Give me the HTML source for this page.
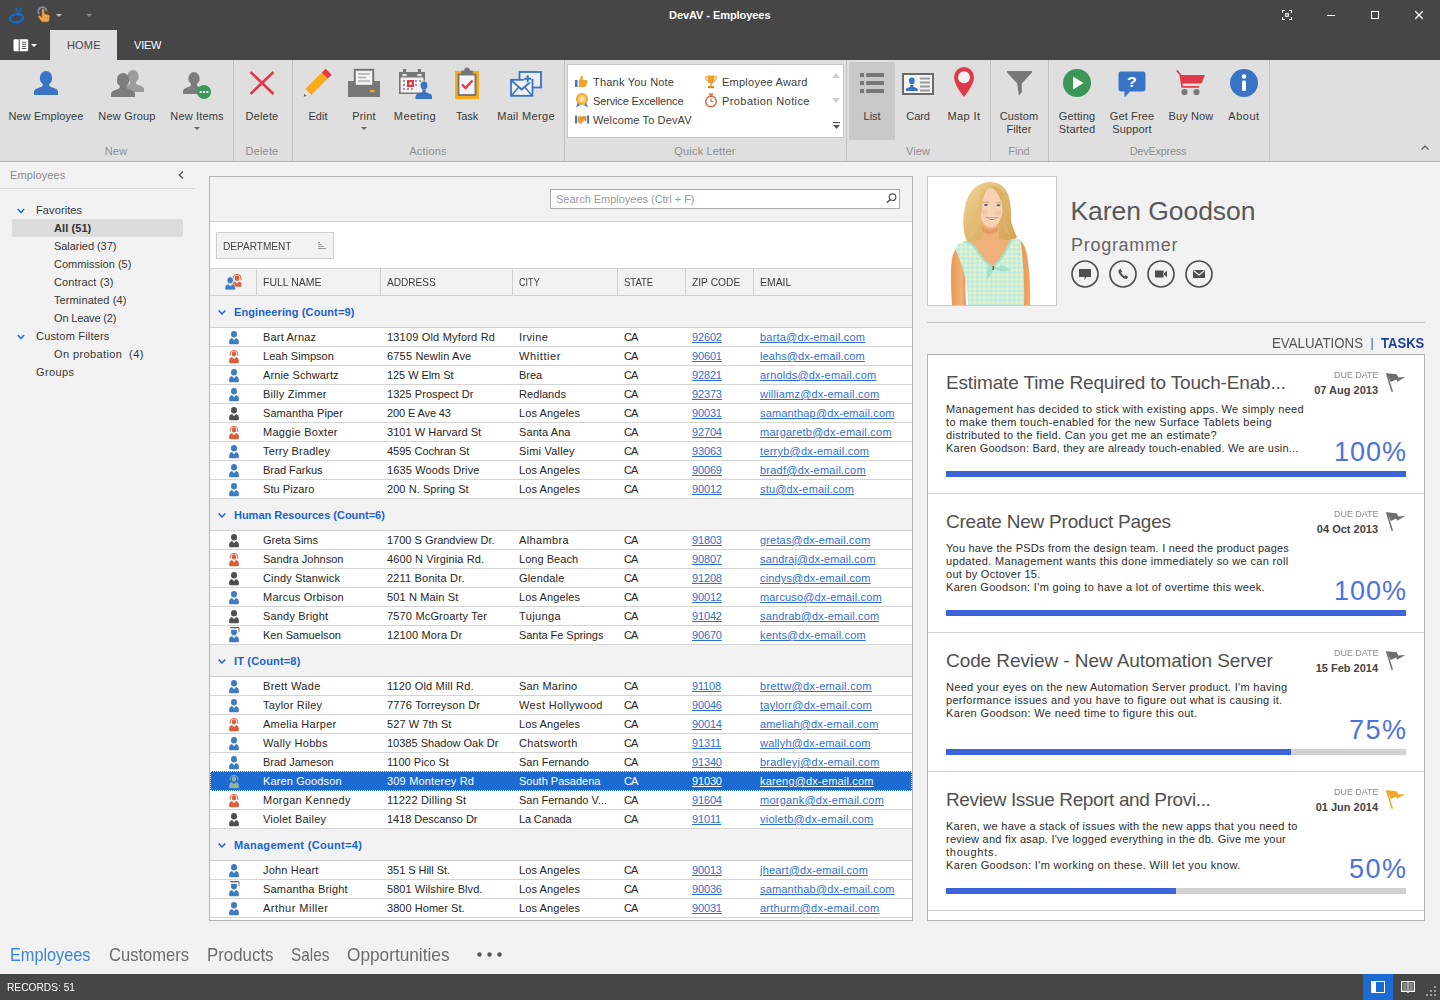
<!DOCTYPE html>
<html lang="en">
<head>
<meta charset="utf-8">
<title>DevAV - Employees</title>
<style>
*{box-sizing:border-box;margin:0;padding:0}
html,body{width:1440px;height:1000px;overflow:hidden}
body{position:relative;background:#f2f2f2;font-family:"Liberation Sans",sans-serif;font-size:11.5px;color:#3a3a3a}
.abs{position:absolute}
.t{position:absolute;white-space:nowrap;line-height:1;transform-origin:0 50%}
svg{position:absolute;overflow:visible}
#titlebar{position:absolute;left:0;top:0;width:1440px;height:60px;background:#464646}
#ribbon{position:absolute;left:0;top:60px;width:1440px;height:102px;background:#dfdfdf;border-bottom:1px solid #b4b4b4}
.rsep{position:absolute;top:60px;width:1px;height:101px;background:#c0c0c0}
.rl{position:absolute;white-space:nowrap;line-height:13px;text-align:center;transform:translateX(-50%);font-size:11px;color:#3a3a3a;letter-spacing:0.12px}
.rg{position:absolute;top:145px;white-space:nowrap;line-height:13px;transform:translateX(-50%);font-size:11px;color:#8f8f8f;letter-spacing:0.15px}
.dd{position:absolute;width:0;height:0;border-left:3px solid transparent;border-right:3px solid transparent;border-top:3px solid #666}
.tree{position:absolute;white-space:nowrap;line-height:15px;font-size:11px;color:#363636;letter-spacing:-0.1px}
.hd{font-size:11px;color:#3c3c3c}
.gr{font-size:11px;font-weight:bold;color:#1a63d1;letter-spacing:0.05px}
.c{font-size:11px;color:#262626}
.c1{letter-spacing:0.1px}.c2{letter-spacing:0.05px}.c3{letter-spacing:0.2px}.c4{letter-spacing:-0.9px}.c5{letter-spacing:-0.15px}.c6{letter-spacing:0.15px}
.w{color:#fff}
.l{color:#2f6fcf;text-decoration:underline}
.u{text-decoration:underline}
.tt{font-size:19px;color:#505050}
.ds{font-size:11px;color:#2c2c2c}
.pc{font-size:27px;color:#4d72e0}
.nv{font-size:19px;color:#6c6c6c}
</style>
</head>
<body>
<div id="titlebar"></div>
<!-- app logo -->
<svg style="left:8px;top:6px" width="18" height="18" viewBox="0 0 18 18"><ellipse cx="8.600" cy="12.200" rx="6.600" ry="4" fill="none" stroke="#0a6fd6" stroke-width="2" transform="rotate(-8 8.600 12.200)"/><path d="M10.500 8L8 2M10.300 8.500L13.700 1.500" stroke="#0a6fd6" stroke-width="1.200" fill="none"/></svg>
<!-- touch icon -->
<svg style="left:36px;top:6px" width="16" height="18" viewBox="0 0 16 18"><path d="M3.2 8.2 A4.3 4.3 0 1 1 10.8 5.2" fill="none" stroke="#8a8fb5" stroke-width="1.6"/><path d="M6 4.2 Q6 3 7.1 3 Q8.2 3 8.2 4.2 L8.2 8 L12.6 9 Q13.6 9.3 13.5 10.4 L13 14.5 Q12.8 15.8 11.5 15.8 L7.2 15.8 Q6.2 15.8 5.5 14.9 L2.6 11.2 Q2.2 10.5 2.9 10 Q3.6 9.6 4.3 10.2 L6 11.6 Z" fill="#f0a848" stroke="#c8782a" stroke-width="0.6"/><path d="M8.3 10.5v3M10 10.8v3M11.7 11.1v2.6" stroke="#c8782a" stroke-width="0.5"/></svg>
<div class="dd" style="left:56px;top:14px;border-top-color:#bdbdbd"></div>
<div class="dd" style="left:86px;top:14px;border-top-color:#8a8a8a"></div>
<div class="t" style="left:669px;top:10px;font-size:11px;font-weight:bold;color:#fff;letter-spacing:-0.063px">DevAV - Employees</div>
<!-- window buttons -->
<svg style="left:1282px;top:10px" width="10" height="10" viewBox="0 0 10 10" fill="none" stroke="#fff" stroke-width="1.100"><path d="M0.550 3v-2.450h2.450M7 0.550h2.450v2.450M9.450 7v2.450h-2.450M3 9.450h-2.450v-2.450"/><rect x="3.700" y="3.700" width="2.600" height="2.600"/></svg>
<div class="abs" style="left:1327px;top:15px;width:8px;height:1px;background:#fff"></div>
<div class="abs" style="left:1371px;top:11px;width:8px;height:8px;border:1px solid #fff"></div>
<svg style="left:1415px;top:11px" width="8" height="8" viewBox="0 0 8 8"><path d="M0.300 0.300L7.700 7.700M7.700 0.300L0.300 7.700" stroke="#fff" stroke-width="1.300"/></svg>
<!-- tabs -->
<svg style="left:13px;top:39px" width="16" height="13" viewBox="0 0 16 13"><rect x="0.500" y="0.300" width="14.700" height="12" rx="1.200" fill="#fff"/><rect x="5.700" y="0.300" width="1" height="12" fill="#464646"/><path d="M8.800 3.300h4.400M8.800 5.400h4.400M8.800 7.400h4.400M8.800 9.500h4.400" stroke="#464646" stroke-width="0.900"/></svg>
<div class="dd" style="left:31px;top:44px;border-top-color:#fff"></div>
<div class="abs" style="left:50px;top:30px;width:67px;height:31px;background:#dfdfdf"></div>
<div class="t" style="left:67px;top:40px;font-size:11px;color:#464646;letter-spacing:0.167px">HOME</div>
<div class="t" style="left:134px;top:40px;font-size:11px;color:#fff;letter-spacing:-0.208px">VIEW</div>
<div id="ribbon"></div>
<div class="rsep" style="left:233px"></div>
<div class="rsep" style="left:292px"></div>
<div class="rsep" style="left:564px"></div>
<div class="rsep" style="left:846px"></div>
<div class="rsep" style="left:990px"></div>
<div class="rsep" style="left:1048px"></div>
<div class="rsep" style="left:1269px"></div>
<svg style="left:34px;top:71px" width="24" height="24" viewBox="0 0 24 24"><ellipse cx="12" cy="7" rx="6.200" ry="7" fill="#3873c6"/><path d="M0 24V20.800Q0 18.400 3 17.400L7.600 15.800Q8.800 15.300 8.800 14V11H15.200V14Q15.200 15.300 16.400 15.800L21 17.400Q24 18.400 24 20.800V24Z" fill="#3873c6"/></svg>
<div class="rl" style="left:46px;top:110px;letter-spacing:0.074px">New Employee</div>
<svg style="left:122px;top:69px" width="22" height="24" viewBox="0 0 24 24"><ellipse cx="12" cy="7" rx="6.200" ry="7" fill="#9c9c9c"/><path d="M0 24V20.800Q0 18.400 3 17.400L7.600 15.800Q8.800 15.300 8.800 14V11H15.200V14Q15.200 15.300 16.400 15.800L21 17.400Q24 18.400 24 20.800V24Z" fill="#9c9c9c"/></svg>
<svg style="left:111px;top:73px" width="24" height="24" viewBox="0 0 24 24"><ellipse cx="12" cy="7" rx="6.200" ry="7" fill="#7d7d7d"/><path d="M0 24V20.800Q0 18.400 3 17.400L7.600 15.800Q8.800 15.300 8.800 14V11H15.200V14Q15.200 15.300 16.400 15.800L21 17.400Q24 18.400 24 20.800V24Z" fill="#7d7d7d"/></svg>
<div class="rl" style="left:127px;top:110px;letter-spacing:0.182px">New Group</div>
<svg style="left:183px;top:71px" width="22" height="24" viewBox="0 0 24 24"><ellipse cx="12" cy="7" rx="6.200" ry="7" fill="#7d7d7d"/><path d="M0 24V20.800Q0 18.400 3 17.400L7.600 15.800Q8.800 15.300 8.800 14V11H15.200V14Q15.200 15.300 16.400 15.800L21 17.400Q24 18.400 24 20.800V24Z" fill="#7d7d7d"/></svg>
<svg style="left:197px;top:85px" width="14" height="14" viewBox="0 0 14 14"><circle cx="7" cy="7" r="7" fill="#3a9659"/><rect x="2.6" y="6" width="2" height="2" fill="#fff"/><rect x="6" y="6" width="2" height="2" fill="#fff"/><rect x="9.4" y="6" width="2" height="2" fill="#fff"/></svg>
<div class="rl" style="left:197px;top:110px;letter-spacing:0.154px">New Items</div>
<div class="dd" style="left:194px;top:127px"></div>
<svg style="left:249px;top:71px" width="26" height="24" viewBox="0 0 26 24"><path d="M1.5 1 L24.5 23 M24.5 1 L1.5 23" stroke="#e03a4a" stroke-width="2.6" fill="none"/></svg>
<div class="rl" style="left:262px;top:110px;letter-spacing:0.161px">Delete</div>
<svg style="left:303px;top:69px" width="29" height="28" viewBox="0 0 29 28"><path d="M0.700 27.700L2.300 20.100L8.300 26.100Z" fill="#e4e4e4"/><path d="M0.700 27.700L1.300 24.800L3.600 27.100Z" fill="#666"/><path d="M2.300 20.100L18.750 3.600L24.750 9.600L8.300 26.100Z" fill="#fbab18"/><path d="M18.750 3.600L22.650 -0.300L28.650 5.700L24.750 9.600Z" fill="#e03a4a"/></svg>
<div class="rl" style="left:318px;top:110px;letter-spacing:0.044px">Edit</div>
<svg style="left:348px;top:69px" width="32" height="28" viewBox="0 0 32 28"><rect x="0" y="12" width="32" height="16" fill="#777"/><rect x="6.800" y="0.800" width="18.400" height="16" fill="#f4f4f4" stroke="#777" stroke-width="2"/><path d="M10 5h12M10 8.500h8M10 12h12" stroke="#b0b0b0" stroke-width="1.700"/><rect x="22" y="21" width="4.500" height="2.200" fill="#fbab18"/></svg>
<div class="rl" style="left:364px;top:110px;letter-spacing:0.219px">Print</div>
<div class="dd" style="left:361px;top:127px"></div>
<svg style="left:399px;top:69px" width="33" height="30" viewBox="0 0 33 30"><rect x="0" y="3" width="26" height="22" fill="#777"/><rect x="1.6" y="8.500" width="22.800" height="15" fill="#f2f2f2"/><rect x="4" y="0" width="3" height="6" fill="#777"/><rect x="19" y="0" width="3" height="6" fill="#777"/><rect x="3.300" y="5" width="4.400" height="2.200" fill="#dfdfdf"/><rect x="18.300" y="5" width="4.400" height="2.200" fill="#dfdfdf"/><g fill="#999"><rect x="4" y="11" width="2" height="2"/><rect x="4" y="15" width="2" height="2"/><rect x="4" y="19" width="2" height="2"/><rect x="8" y="19" width="2" height="2"/><rect x="12" y="19" width="2" height="2"/><rect x="16" y="11" width="2" height="2"/><rect x="16" y="15" width="2" height="2"/><rect x="20" y="11" width="2" height="2"/></g><rect x="8" y="11" width="7" height="7" fill="#e03a4a"/><rect x="10.300" y="13.300" width="2.400" height="2.400" fill="#fff"/><ellipse cx="25" cy="16.500" rx="3.800" ry="4.500" fill="#3873c6" stroke="#dfdfdf" stroke-width="0.800"/><path d="M16.500 30V27.500Q16.500 25.500 19 24.800L22.600 23.600Q23.400 23.200 23.400 22V20.500H26.600V22Q26.600 23.200 27.400 23.600L31 24.800Q33 25.500 33 27.500V30Z" fill="#3873c6"/></svg>
<div class="rl" style="left:415px;top:110px;letter-spacing:0.460px">Meeting</div>
<svg style="left:455px;top:67px" width="24" height="32" viewBox="0 0 24 32"><rect x="1" y="5" width="22" height="26" fill="#fbab18" stroke="#fbab18" stroke-width="2"/><rect x="3.500" y="7.500" width="17" height="20.500" fill="#f2f2f2" stroke="#777" stroke-width="1.900"/><path d="M6 7.500V4.500Q6 3.500 7 3.500H9Q9.500 0.500 12 0.500Q14.500 0.500 15 3.500H17Q18 3.500 18 4.500V7.500Z" fill="#777"/><path d="M7 17.500L10.500 21L17.500 13.500" stroke="#e03a4a" stroke-width="2.400" fill="none"/></svg>
<div class="rl" style="left:467px;top:110px;letter-spacing:-0.142px">Task</div>
<svg style="left:510px;top:70px" width="32" height="27" viewBox="0 0 32 27" fill="none" stroke="#3873c6"><rect x="9.500" y="2" width="21.500" height="15.500" stroke-width="1.800" fill="#ececec"/><rect x="1" y="9.800" width="21.500" height="16" stroke-width="1.800" fill="#f2f2f2"/><path d="M1.500 10.500L11.700 19.500L22 10.500" stroke-width="1.700"/><path d="M1.500 25.500L8.700 17.300M22 25.500L14.800 17.300" stroke-width="1.500"/><rect x="14" y="5" width="7.500" height="7.500" fill="#ececec" stroke="none"/><path d="M17.700 5.300V12.300M14.200 8.800H21.200" stroke-width="1.900"/></svg>
<div class="rl" style="left:526px;top:110px;letter-spacing:0.333px">Mail Merge</div>
<div class="abs" style="left:567px;top:64px;width:277px;height:74px;background:#fff;border:1px solid #c6c6c6"></div>

<div class="t" style="left:593px;top:77px;font-size:11px;color:#3c3c3c;letter-spacing:0.208px">Thank You Note</div>
<div class="t" style="left:593px;top:96px;font-size:11px;color:#3c3c3c;letter-spacing:-0.143px">Service Excellence</div>
<div class="t" style="left:593px;top:115px;font-size:11px;color:#3c3c3c;letter-spacing:0.127px">Welcome To DevAV</div>
<div class="t" style="left:722px;top:77px;font-size:11px;color:#3c3c3c;letter-spacing:0.242px">Employee Award</div>
<div class="t" style="left:722px;top:96px;font-size:11px;color:#3c3c3c;letter-spacing:0.411px">Probation Notice</div>
<svg style="left:575px;top:75px" width="13" height="13" viewBox="0 0 13 13"><rect x="0" y="5" width="2.600" height="7" fill="#3b79c0"/><path d="M4 5.500L6.500 0.800Q8.500 0.500 8 3L7.500 5H11.500Q12.800 5.200 12.300 7L11.200 11Q10.800 12 9.800 12H4Z" fill="#f0a030"/></svg>
<svg style="left:575px;top:93px" width="14" height="15" viewBox="0 0 14 15"><path d="M3 9L1 14.500L4.500 12.500L6 14.500Z M11 9L13 14.500L9.500 12.500L8 14.500Z" fill="#4a7fc8"/><circle cx="7" cy="6" r="5.300" fill="#f7c35a" stroke="#e79a22" stroke-width="1.200"/><circle cx="7" cy="6" r="2.600" fill="#fbe3a8"/></svg>
<svg style="left:575px;top:115px" width="14" height="11" viewBox="0 0 14 11"><rect x="0" y="0.500" width="2" height="8" fill="#3b79c0"/><rect x="12" y="0.500" width="2" height="8" fill="#3b79c0"/><path d="M2.500 1.500L6 1L9.500 5.500L7.500 7.500L5.500 9L2.500 7Z" fill="#f0a030"/><path d="M11.500 1.500L8 1L5 4L7 5L8.500 4L11 7Z" fill="#d89030"/></svg>
<svg style="left:705px;top:75px" width="12" height="14" viewBox="0 0 12 14"><path d="M2.500 0.500H9.500V5Q9.500 8.500 6 8.500Q2.500 8.500 2.500 5Z" fill="#f0a030"/><path d="M2.500 1.500H0.700V3.500Q0.700 5.500 3 6M9.500 1.500H11.300V3.500Q11.300 5.500 9 6" stroke="#f0a030" stroke-width="1" fill="none"/><rect x="5.200" y="8" width="1.600" height="3" fill="#f0a030"/><rect x="3" y="11" width="6" height="2.200" fill="#d88a20"/></svg>
<svg style="left:704px;top:93px" width="14" height="15" viewBox="0 0 14 15"><circle cx="7" cy="8.500" r="5.300" fill="#fff" stroke="#d8693c" stroke-width="1.400"/><rect x="5" y="0.500" width="4" height="1.800" fill="#d8693c"/><path d="M7 2V3.500M7 5.500V8.500H9.500" stroke="#d8693c" stroke-width="1.200" fill="none"/></svg>
<svg style="left:832px;top:73px" width="8" height="5" viewBox="0 0 8 5"><path d="M0 5L4 0L8 5Z" fill="#d0d0d0"/></svg>
<svg style="left:832px;top:98px" width="8" height="5" viewBox="0 0 8 5"><path d="M0 0L4 5L8 0Z" fill="#d0d0d0"/></svg>
<svg style="left:833px;top:122px" width="7" height="7" viewBox="0 0 7 7"><rect x="0" y="0" width="7" height="1.200" fill="#555"/><path d="M0 3L3.500 7L7 3Z" fill="#555"/></svg>
<div class="abs" style="left:849px;top:62px;width:46px;height:78px;background:#c9c9c9"></div>
<svg style="left:860px;top:72px" width="24" height="22" viewBox="0 0 24 22" fill="#777"><rect x="0" y="1" width="4" height="4"/><rect x="6.200" y="1" width="17.800" height="4"/><rect x="0" y="9" width="4" height="4"/><rect x="6.200" y="9" width="17.800" height="4"/><rect x="0" y="17" width="4" height="4"/><rect x="6.200" y="17" width="17.800" height="4"/></svg>
<div class="rl" style="left:872px;top:110px;letter-spacing:-0.075px">List</div>
<svg style="left:902px;top:73px" width="32" height="22" viewBox="0 0 32 22"><rect x="1" y="1" width="30" height="20" fill="#f4f4f4" stroke="#6a6a6a" stroke-width="2"/><ellipse cx="9.800" cy="7.800" rx="2.900" ry="3.400" fill="#3873c6"/><path d="M3.800 18V16.800Q3.800 15.300 5.800 14.700L8.200 13.900V12H11.400V13.900L13.800 14.700Q15.800 15.300 15.800 16.800V18Z" fill="#3873c6"/><path d="M18 5.500H28M18 9.500H28M18 13.500H28M18 17.500H28" stroke="#9a9a9a" stroke-width="1.800"/></svg>
<div class="rl" style="left:918px;top:110px;letter-spacing:-0.148px">Card</div>
<svg style="left:954px;top:67px" width="20" height="30" viewBox="0 0 20 30"><path d="M10 30Q0 17.500 0 10.200A10 10.200 0 0 1 20 10.200Q20 17.500 10 30Z" fill="#e03a4a"/><circle cx="10" cy="10.200" r="6" fill="#f2f2f2"/></svg>
<div class="rl" style="left:964px;top:110px;letter-spacing:0.404px">Map It</div>
<svg style="left:1007px;top:71px" width="25" height="25" viewBox="0 0 25 25"><path d="M0 0H25V1.500L14.800 12.500V21.500L11.800 24.500L10.200 12.500L0 1.500Z" fill="#777"/></svg>
<div class="rl" style="left:1019px;top:110px">Custom<br>Filter</div>
<svg style="left:1063px;top:69px" width="28" height="28" viewBox="0 0 28 28"><circle cx="14" cy="14" r="14" fill="#3a9659"/><path d="M10 7.500L20.500 14L10 20.500Z" fill="#fff"/></svg>
<div class="rl" style="left:1077px;top:110px">Getting<br>Started</div>
<svg style="left:1118px;top:71px" width="28" height="27.500" viewBox="0 0 28 29" preserveAspectRatio="none"><path d="M3 0.500H25Q27.500 0.500 27.500 3V19Q27.500 21.500 25 21.500H12L6.500 28V21.500H3Q0.500 21.500 0.500 19V3Q0.500 0.500 3 0.500Z" fill="#3873c6"/><text x="14" y="16.500" font-family="Liberation Sans,sans-serif" font-size="16" font-weight="bold" fill="#fff" text-anchor="middle">?</text></svg>
<div class="rl" style="left:1132px;top:110px">Get Free<br>Support</div>
<svg style="left:1176px;top:70px" width="30" height="26" viewBox="0 0 30 26"><path d="M0.800 0.500L4.200 4.500L6.200 16.800H23" stroke="#e03a4a" stroke-width="1.700" fill="none"/><path d="M4.500 5H29L25.500 13.500H5.800Z" fill="#e03a4a"/><circle cx="8.500" cy="22" r="3.100" fill="#777"/><circle cx="20.500" cy="22" r="3.100" fill="#777"/></svg>
<div class="rl" style="left:1191px;top:110px;letter-spacing:0.111px">Buy Now</div>
<svg style="left:1230px;top:69px" width="28" height="28" viewBox="0 0 28 28"><circle cx="14" cy="14" r="14" fill="#3873c6"/><circle cx="14" cy="7.500" r="2.300" fill="#fff"/><rect x="12" y="11.500" width="4" height="10.500" rx="1" fill="#fff"/></svg>
<div class="rl" style="left:1244px;top:110px;letter-spacing:0.537px">About</div>
<div class="rg" style="left:116px;letter-spacing:0.192px">New</div>
<div class="rg" style="left:262px;letter-spacing:0.161px">Delete</div>
<div class="rg" style="left:428px;letter-spacing:0.220px">Actions</div>
<div class="rg" style="left:705px;letter-spacing:0.163px">Quick Letter</div>
<div class="rg" style="left:918px;letter-spacing:0.081px">View</div>
<div class="rg" style="left:1019px;letter-spacing:-0.002px">Find</div>
<div class="rg" style="left:1158px;letter-spacing:-0.266px">DevExpress</div>
<svg style="left:1421px;top:145px" width="8" height="5" viewBox="0 0 8 5"><path d="M0.500 4.500L4 1L7.500 4.500" stroke="#555" stroke-width="1.200" fill="none"/></svg>
<div class="t" style="left:10px;top:170px;font-size:11px;color:#8c8c8c;letter-spacing:0.1px">Employees</div>
<svg style="left:178px;top:171px" width="6" height="8" viewBox="0 0 6 8"><path d="M5 0.500L1.200 4L5 7.500" stroke="#555" stroke-width="1.300" fill="none"/></svg>
<div class="abs" style="left:0;top:188px;width:195px;height:1px;background:#d2d2d2"></div>
<div class="abs" style="left:12px;top:219px;width:171px;height:18px;background:#dcdcdc"></div>
<div class="tree" style="left:36px;top:203px;;letter-spacing:0.106px">Favorites</div>
<svg style="left:17px;top:208px" width="8" height="6" viewBox="0 0 8 6"><path d="M0.800 1L4 4.600L7.200 1" stroke="#1f6fd0" stroke-width="1.500" fill="none"/></svg>
<div class="tree" style="left:54px;top:221px;font-weight:bold;color:#333;;letter-spacing:0.087px">All (51)</div>
<div class="tree" style="left:54px;top:239px;;letter-spacing:-0.049px">Salaried (37)</div>
<div class="tree" style="left:54px;top:257px;;letter-spacing:0.030px">Commission (5)</div>
<div class="tree" style="left:54px;top:275px;;letter-spacing:0.111px">Contract (3)</div>
<div class="tree" style="left:54px;top:293px;;letter-spacing:0.106px">Terminated (4)</div>
<div class="tree" style="left:54px;top:311px;;letter-spacing:-0.164px">On Leave (2)</div>
<div class="tree" style="left:36px;top:329px;;letter-spacing:0.184px">Custom Filters</div>
<svg style="left:17px;top:334px" width="8" height="6" viewBox="0 0 8 6"><path d="M0.800 1L4 4.600L7.200 1" stroke="#1f6fd0" stroke-width="1.500" fill="none"/></svg>
<div class="tree" style="left:54px;top:347px;;letter-spacing:0.384px">On probation&nbsp; (4)</div>
<div class="tree" style="left:36px;top:365px;;letter-spacing:0.364px">Groups</div>
<div class="abs" style="left:209px;top:176px;width:704px;height:745px;background:#fff;border:1px solid #b4b4b4"></div>
<div class="abs" style="left:210px;top:177px;width:702px;height:45px;background:#f2f2f2;border-bottom:1px solid #cfcfcf"></div>
<div class="abs" style="left:550px;top:189px;width:350px;height:20px;background:#fff;border:1px solid #adadad"></div>
<div class="t" style="left:556px;top:194px;font-size:11px;color:#999;letter-spacing:-0.022px">Search Employees (Ctrl + F)</div>
<svg style="left:886px;top:193px" width="11" height="11" viewBox="0 0 11 11"><circle cx="6.500" cy="4.200" r="3.300" fill="none" stroke="#555" stroke-width="1.200"/><path d="M4.200 6.600L0.900 9.800" stroke="#555" stroke-width="1.500"/></svg>
<div class="abs" style="left:216px;top:232px;width:118px;height:27px;background:#f2f2f2;border:1px solid #cfcfcf"></div>
<div class="t" style="left:223px;top:241px;font-size:11px;color:#444;transform:scaleX(0.9162)">DEPARTMENT</div>
<svg style="left:318px;top:242px" width="8" height="7" viewBox="0 0 8 7" fill="#9a9a9a"><rect x="0" y="0" width="2" height="1"/><rect x="0" y="2" width="4" height="1"/><rect x="0" y="4" width="6" height="1"/><rect x="0" y="6" width="8" height="1"/></svg>
<div class="abs" style="left:210px;top:268px;width:702px;height:28px;background:#f2f2f2;border-top:1px solid #cfcfcf;border-bottom:1px solid #cfcfcf"></div>
<div class="abs" style="left:256px;top:269px;width:1px;height:26px;background:#cfcfcf"></div>
<div class="abs" style="left:380px;top:269px;width:1px;height:26px;background:#cfcfcf"></div>
<div class="abs" style="left:512px;top:269px;width:1px;height:26px;background:#cfcfcf"></div>
<div class="abs" style="left:617px;top:269px;width:1px;height:26px;background:#cfcfcf"></div>
<div class="abs" style="left:685px;top:269px;width:1px;height:26px;background:#cfcfcf"></div>
<div class="abs" style="left:753px;top:269px;width:1px;height:26px;background:#cfcfcf"></div>
<div class="t hd" style="left:263px;top:277px;transform:scaleX(0.9539)">FULL NAME</div>
<div class="t hd" style="left:387px;top:277px;transform:scaleX(0.9175)">ADDRESS</div>
<div class="t hd" style="left:519px;top:277px;transform:scaleX(0.8259)">CITY</div>
<div class="t hd" style="left:624px;top:277px;transform:scaleX(0.8632)">STATE</div>
<div class="t hd" style="left:692px;top:277px;transform:scaleX(0.9331)">ZIP CODE</div>
<div class="t hd" style="left:760px;top:277px;transform:scaleX(0.9480)">EMAIL</div>
<svg style="left:225px;top:274px" width="17" height="16" viewBox="0 0 17 16"><ellipse cx="12" cy="4.300" rx="2.300" ry="2.700" fill="#dc5f3c"/><path d="M8 6.300V4.200A4 3.800 0 0 1 16 4.200V6.300" fill="none" stroke="#dc5f3c" stroke-width="1"/><path d="M7.500 12.800V10.500Q7.500 8.300 9.800 7.600L12 9.600L14.200 7.600Q16.500 8.300 16.500 10.500V11.600Q16.500 12.800 15.300 12.800Z" fill="#dc5f3c"/><ellipse cx="5.200" cy="6.300" rx="3.300" ry="3.600" fill="#3d7cc4" stroke="#f2f2f2" stroke-width="0.900"/><path d="M0 14.800V13.500Q0 11 2.300 10.200L3.200 9.900L5.200 12L7.200 9.900L8.100 10.200Q10.400 11 10.400 13.500V14.800Q10.400 16 9.200 16H1.200Q0 16 0 14.800Z" fill="#3d7cc4" stroke="#f2f2f2" stroke-width="0.700"/></svg>
<div class="abs" style="left:210px;top:296px;width:702px;height:32px;background:#f2f2f2;border-bottom:1px solid #cfcfcf"></div>
<svg style="left:218px;top:310px" width="8" height="5" viewBox="0 0 8 5"><path d="M0.700 0.600L4 4L7.300 0.600" stroke="#1a63d1" stroke-width="1.500" fill="none"/></svg>
<div class="t gr" style="left:234px;top:307px;letter-spacing:0.102px">Engineering (Count=9)</div>
<div class="abs" style="left:210px;top:346px;width:702px;height:1px;background:#d4d4d4"></div>
<svg style="left:229px;top:331px" width="10" height="13" viewBox="0 0 10 13"><ellipse cx="5" cy="3.300" rx="3" ry="3.300" fill="#3d7cc4"/><path d="M0.100 12V10.800Q0.100 8.200 2.300 7.300L3 7L5 9.300L7 7L7.700 7.300Q9.900 8.200 9.900 10.800V12Q9.900 13.200 8.600 13.200H1.400Q0.100 13.200 0.100 12Z" fill="#3d7cc4"/></svg>
<div class="t c" style="left:263px;top:332px;letter-spacing:0.182px">Bart Arnaz</div>
<div class="t c" style="left:387px;top:332px;letter-spacing:0.185px">13109 Old Myford Rd</div>
<div class="t c" style="left:519px;top:332px;letter-spacing:0.379px">Irvine</div>
<div class="t c c4" style="left:624px;top:332px">CA</div>
<div class="t c l c5" style="left:692px;top:332px">92602</div>
<div class="t c l" style="left:760px;top:332px;letter-spacing:0.197px">barta@dx-email.com</div>
<div class="abs" style="left:210px;top:365px;width:702px;height:1px;background:#d4d4d4"></div>
<svg style="left:229px;top:350px" width="10" height="13" viewBox="0 0 10 13"><ellipse cx="5" cy="3.900" rx="2.200" ry="2.600" fill="#dc5f3c"/><path d="M1.200 5.700V3.900A3.800 3.500 0 0 1 8.800 3.900V5.700" fill="none" stroke="#dc5f3c" stroke-width="1"/><path d="M0.100 12V10.800Q0.100 8.200 2.300 7.300L3 7L5 9.300L7 7L7.700 7.300Q9.900 8.200 9.900 10.800V12Q9.900 13.200 8.600 13.200H1.400Q0.100 13.200 0.100 12Z" fill="#dc5f3c"/></svg>
<div class="t c" style="left:263px;top:351px;letter-spacing:0.052px">Leah Simpson</div>
<div class="t c" style="left:387px;top:351px;letter-spacing:0.175px">6755 Newlin Ave</div>
<div class="t c" style="left:519px;top:351px;letter-spacing:0.603px">Whittier</div>
<div class="t c c4" style="left:624px;top:351px">CA</div>
<div class="t c l c5" style="left:692px;top:351px">90601</div>
<div class="t c l" style="left:760px;top:351px;letter-spacing:0.107px">leahs@dx-email.com</div>
<div class="abs" style="left:210px;top:384px;width:702px;height:1px;background:#d4d4d4"></div>
<svg style="left:229px;top:369px" width="10" height="13" viewBox="0 0 10 13"><ellipse cx="5" cy="3.300" rx="3" ry="3.300" fill="#3d7cc4"/><path d="M0.100 12V10.800Q0.100 8.200 2.300 7.300L3 7L5 9.300L7 7L7.700 7.300Q9.900 8.200 9.900 10.800V12Q9.900 13.200 8.600 13.200H1.400Q0.100 13.200 0.100 12Z" fill="#3d7cc4"/></svg>
<div class="t c" style="left:263px;top:370px;letter-spacing:0.124px">Arnie Schwartz</div>
<div class="t c" style="left:387px;top:370px;letter-spacing:-0.068px">125 W Elm St</div>
<div class="t c" style="left:519px;top:370px;letter-spacing:-0.050px">Brea</div>
<div class="t c c4" style="left:624px;top:370px">CA</div>
<div class="t c l c5" style="left:692px;top:370px">92821</div>
<div class="t c l" style="left:760px;top:370px;letter-spacing:0.187px">arnolds@dx-email.com</div>
<div class="abs" style="left:210px;top:403px;width:702px;height:1px;background:#d4d4d4"></div>
<svg style="left:229px;top:388px" width="10" height="13" viewBox="0 0 10 13"><ellipse cx="5" cy="3.300" rx="3" ry="3.300" fill="#3d7cc4"/><path d="M0.100 12V10.800Q0.100 8.200 2.300 7.300L3 7L5 9.300L7 7L7.700 7.300Q9.900 8.200 9.900 10.800V12Q9.900 13.200 8.600 13.200H1.400Q0.100 13.200 0.100 12Z" fill="#3d7cc4"/></svg>
<div class="t c" style="left:263px;top:389px;letter-spacing:0.273px">Billy Zimmer</div>
<div class="t c" style="left:387px;top:389px;letter-spacing:0.059px">1325 Prospect Dr</div>
<div class="t c" style="left:519px;top:389px;letter-spacing:0.074px">Redlands</div>
<div class="t c c4" style="left:624px;top:389px">CA</div>
<div class="t c l c5" style="left:692px;top:389px">92373</div>
<div class="t c l" style="left:760px;top:389px;letter-spacing:0.206px">williamz@dx-email.com</div>
<div class="abs" style="left:210px;top:422px;width:702px;height:1px;background:#d4d4d4"></div>
<svg style="left:229px;top:407px" width="10" height="13" viewBox="0 0 10 13"><ellipse cx="5" cy="3.300" rx="3" ry="3.300" fill="#4f4f4f"/><path d="M0.100 12V10.800Q0.100 8.200 2.300 7.300L3 7L5 9.300L7 7L7.700 7.300Q9.900 8.200 9.900 10.800V12Q9.900 13.200 8.600 13.200H1.400Q0.100 13.200 0.100 12Z" fill="#4f4f4f"/></svg>
<div class="t c" style="left:263px;top:408px;letter-spacing:0.085px">Samantha Piper</div>
<div class="t c" style="left:387px;top:408px;letter-spacing:-0.114px">200 E Ave 43</div>
<div class="t c" style="left:519px;top:408px;letter-spacing:0.106px">Los Angeles</div>
<div class="t c c4" style="left:624px;top:408px">CA</div>
<div class="t c l c5" style="left:692px;top:408px">90031</div>
<div class="t c l" style="left:760px;top:408px;letter-spacing:0.162px">samanthap@dx-email.com</div>
<div class="abs" style="left:210px;top:441px;width:702px;height:1px;background:#d4d4d4"></div>
<svg style="left:229px;top:426px" width="10" height="13" viewBox="0 0 10 13"><ellipse cx="5" cy="3.900" rx="2.200" ry="2.600" fill="#dc5f3c"/><path d="M1.200 5.700V3.900A3.800 3.500 0 0 1 8.800 3.900V5.700" fill="none" stroke="#dc5f3c" stroke-width="1"/><path d="M0.100 12V10.800Q0.100 8.200 2.300 7.300L3 7L5 9.300L7 7L7.700 7.300Q9.900 8.200 9.900 10.800V12Q9.900 13.200 8.600 13.200H1.400Q0.100 13.200 0.100 12Z" fill="#dc5f3c"/></svg>
<div class="t c" style="left:263px;top:427px;letter-spacing:0.297px">Maggie Boxter</div>
<div class="t c" style="left:387px;top:427px;letter-spacing:0.035px">3101 W Harvard St</div>
<div class="t c" style="left:519px;top:427px;letter-spacing:0.090px">Santa Ana</div>
<div class="t c c4" style="left:624px;top:427px">CA</div>
<div class="t c l c5" style="left:692px;top:427px">92704</div>
<div class="t c l" style="left:760px;top:427px;letter-spacing:0.232px">margaretb@dx-email.com</div>
<div class="abs" style="left:210px;top:460px;width:702px;height:1px;background:#d4d4d4"></div>
<svg style="left:229px;top:445px" width="10" height="13" viewBox="0 0 10 13"><ellipse cx="5" cy="3.300" rx="3" ry="3.300" fill="#3d7cc4"/><path d="M0.100 12V10.800Q0.100 8.200 2.300 7.300L3 7L5 9.300L7 7L7.700 7.300Q9.900 8.200 9.900 10.800V12Q9.900 13.200 8.600 13.200H1.400Q0.100 13.200 0.100 12Z" fill="#3d7cc4"/></svg>
<div class="t c" style="left:263px;top:446px;letter-spacing:0.184px">Terry Bradley</div>
<div class="t c" style="left:387px;top:446px;letter-spacing:-0.012px">4595 Cochran St</div>
<div class="t c" style="left:519px;top:446px;letter-spacing:0.201px">Simi Valley</div>
<div class="t c c4" style="left:624px;top:446px">CA</div>
<div class="t c l c5" style="left:692px;top:446px">93063</div>
<div class="t c l" style="left:760px;top:446px;letter-spacing:0.239px">terryb@dx-email.com</div>
<div class="abs" style="left:210px;top:479px;width:702px;height:1px;background:#d4d4d4"></div>
<svg style="left:229px;top:464px" width="10" height="13" viewBox="0 0 10 13"><ellipse cx="5" cy="3.300" rx="3" ry="3.300" fill="#3d7cc4"/><path d="M0.100 12V10.800Q0.100 8.200 2.300 7.300L3 7L5 9.300L7 7L7.700 7.300Q9.900 8.200 9.900 10.800V12Q9.900 13.200 8.600 13.200H1.400Q0.100 13.200 0.100 12Z" fill="#3d7cc4"/></svg>
<div class="t c" style="left:263px;top:465px;letter-spacing:-0.042px">Brad Farkus</div>
<div class="t c" style="left:387px;top:465px;letter-spacing:0.140px">1635 Woods Drive</div>
<div class="t c" style="left:519px;top:465px;letter-spacing:0.106px">Los Angeles</div>
<div class="t c c4" style="left:624px;top:465px">CA</div>
<div class="t c l c5" style="left:692px;top:465px">90069</div>
<div class="t c l" style="left:760px;top:465px;letter-spacing:0.232px">bradf@dx-email.com</div>
<div class="abs" style="left:210px;top:498px;width:702px;height:1px;background:#d4d4d4"></div>
<svg style="left:229px;top:483px" width="10" height="13" viewBox="0 0 10 13"><ellipse cx="5" cy="3.300" rx="3" ry="3.300" fill="#3d7cc4"/><path d="M0.100 12V10.800Q0.100 8.200 2.300 7.300L3 7L5 9.300L7 7L7.700 7.300Q9.900 8.200 9.900 10.800V12Q9.900 13.200 8.600 13.200H1.400Q0.100 13.200 0.100 12Z" fill="#3d7cc4"/></svg>
<div class="t c" style="left:263px;top:484px;letter-spacing:0.061px">Stu Pizaro</div>
<div class="t c" style="left:387px;top:484px;letter-spacing:0.059px">200 N. Spring St</div>
<div class="t c" style="left:519px;top:484px;letter-spacing:0.106px">Los Angeles</div>
<div class="t c c4" style="left:624px;top:484px">CA</div>
<div class="t c l c5" style="left:692px;top:484px">90012</div>
<div class="t c l" style="left:760px;top:484px;letter-spacing:0.177px">stu@dx-email.com</div>
<div class="abs" style="left:210px;top:499px;width:702px;height:32px;background:#f2f2f2;border-bottom:1px solid #cfcfcf"></div>
<svg style="left:218px;top:513px" width="8" height="5" viewBox="0 0 8 5"><path d="M0.700 0.600L4 4L7.300 0.600" stroke="#1a63d1" stroke-width="1.500" fill="none"/></svg>
<div class="t gr" style="left:234px;top:510px;letter-spacing:-0.020px">Human Resources (Count=6)</div>
<div class="abs" style="left:210px;top:549px;width:702px;height:1px;background:#d4d4d4"></div>
<svg style="left:229px;top:534px" width="10" height="13" viewBox="0 0 10 13"><ellipse cx="5" cy="3.300" rx="3" ry="3.300" fill="#4f4f4f"/><path d="M0.100 12V10.800Q0.100 8.200 2.300 7.300L3 7L5 9.300L7 7L7.700 7.300Q9.900 8.200 9.900 10.800V12Q9.900 13.200 8.600 13.200H1.400Q0.100 13.200 0.100 12Z" fill="#4f4f4f"/></svg>
<div class="t c" style="left:263px;top:535px;letter-spacing:-0.002px">Greta Sims</div>
<div class="t c" style="left:387px;top:535px;letter-spacing:-0.001px">1700 S Grandview Dr.</div>
<div class="t c" style="left:519px;top:535px;letter-spacing:0.360px">Alhambra</div>
<div class="t c c4" style="left:624px;top:535px">CA</div>
<div class="t c l c5" style="left:692px;top:535px">91803</div>
<div class="t c l" style="left:760px;top:535px;letter-spacing:0.164px">gretas@dx-email.com</div>
<div class="abs" style="left:210px;top:568px;width:702px;height:1px;background:#d4d4d4"></div>
<svg style="left:229px;top:553px" width="10" height="13" viewBox="0 0 10 13"><ellipse cx="5" cy="3.900" rx="2.200" ry="2.600" fill="#dc5f3c"/><path d="M1.200 5.700V3.900A3.800 3.500 0 0 1 8.800 3.900V5.700" fill="none" stroke="#dc5f3c" stroke-width="1"/><path d="M0.100 12V10.800Q0.100 8.200 2.300 7.300L3 7L5 9.300L7 7L7.700 7.300Q9.900 8.200 9.900 10.800V12Q9.900 13.200 8.600 13.200H1.400Q0.100 13.200 0.100 12Z" fill="#dc5f3c"/></svg>
<div class="t c" style="left:263px;top:554px;letter-spacing:0.029px">Sandra Johnson</div>
<div class="t c" style="left:387px;top:554px;letter-spacing:0.101px">4600 N Virginia Rd.</div>
<div class="t c" style="left:519px;top:554px;letter-spacing:0.042px">Long Beach</div>
<div class="t c c4" style="left:624px;top:554px">CA</div>
<div class="t c l c5" style="left:692px;top:554px">90807</div>
<div class="t c l" style="left:760px;top:554px;letter-spacing:0.139px">sandraj@dx-email.com</div>
<div class="abs" style="left:210px;top:587px;width:702px;height:1px;background:#d4d4d4"></div>
<svg style="left:229px;top:572px" width="10" height="13" viewBox="0 0 10 13"><ellipse cx="5" cy="3.300" rx="3" ry="3.300" fill="#4f4f4f"/><path d="M0.100 12V10.800Q0.100 8.200 2.300 7.300L3 7L5 9.300L7 7L7.700 7.300Q9.900 8.200 9.900 10.800V12Q9.900 13.200 8.600 13.200H1.400Q0.100 13.200 0.100 12Z" fill="#4f4f4f"/></svg>
<div class="t c" style="left:263px;top:573px;letter-spacing:0.131px">Cindy Stanwick</div>
<div class="t c" style="left:387px;top:573px;letter-spacing:0.177px">2211 Bonita Dr.</div>
<div class="t c" style="left:519px;top:573px;letter-spacing:0.179px">Glendale</div>
<div class="t c c4" style="left:624px;top:573px">CA</div>
<div class="t c l c5" style="left:692px;top:573px">91208</div>
<div class="t c l" style="left:760px;top:573px;letter-spacing:0.153px">cindys@dx-email.com</div>
<div class="abs" style="left:210px;top:606px;width:702px;height:1px;background:#d4d4d4"></div>
<svg style="left:229px;top:591px" width="10" height="13" viewBox="0 0 10 13"><ellipse cx="5" cy="3.300" rx="3" ry="3.300" fill="#3d7cc4"/><path d="M0.100 12V10.800Q0.100 8.200 2.300 7.300L3 7L5 9.300L7 7L7.700 7.300Q9.900 8.200 9.900 10.800V12Q9.900 13.200 8.600 13.200H1.400Q0.100 13.200 0.100 12Z" fill="#3d7cc4"/></svg>
<div class="t c" style="left:263px;top:592px;letter-spacing:0.235px">Marcus Orbison</div>
<div class="t c" style="left:387px;top:592px;letter-spacing:0.133px">501 N Main St</div>
<div class="t c" style="left:519px;top:592px;letter-spacing:0.106px">Los Angeles</div>
<div class="t c c4" style="left:624px;top:592px">CA</div>
<div class="t c l c5" style="left:692px;top:592px">90012</div>
<div class="t c l" style="left:760px;top:592px;letter-spacing:0.150px">marcuso@dx-email.com</div>
<div class="abs" style="left:210px;top:625px;width:702px;height:1px;background:#d4d4d4"></div>
<svg style="left:229px;top:610px" width="10" height="13" viewBox="0 0 10 13"><ellipse cx="5" cy="3.300" rx="3" ry="3.300" fill="#4f4f4f"/><path d="M0.100 12V10.800Q0.100 8.200 2.300 7.300L3 7L5 9.300L7 7L7.700 7.300Q9.900 8.200 9.900 10.800V12Q9.900 13.200 8.600 13.200H1.400Q0.100 13.200 0.100 12Z" fill="#4f4f4f"/></svg>
<div class="t c" style="left:263px;top:611px;letter-spacing:0.183px">Sandy Bright</div>
<div class="t c" style="left:387px;top:611px;letter-spacing:0.170px">7570 McGroarty Ter</div>
<div class="t c" style="left:519px;top:611px;letter-spacing:0.359px">Tujunga</div>
<div class="t c c4" style="left:624px;top:611px">CA</div>
<div class="t c l c5" style="left:692px;top:611px">91042</div>
<div class="t c l" style="left:760px;top:611px;letter-spacing:0.146px">sandrab@dx-email.com</div>
<div class="abs" style="left:210px;top:644px;width:702px;height:1px;background:#d4d4d4"></div>
<svg style="left:229px;top:629px" width="10" height="13" viewBox="0 0 10 13"><path d="M1 -1.500H10V2.800" stroke="#666" stroke-width="1" fill="none"/><path d="M2 -0.200H8" stroke="#888" stroke-width="0.700"/><path d="M2.100 0.900H7.900V3.600Q7.900 6.600 5 6.600Q2.100 6.600 2.100 3.600Z" fill="#3d7cc4"/><path d="M0.100 12V10.800Q0.100 8.200 2.300 7.300L3 7L5 9.300L7 7L7.700 7.300Q9.900 8.200 9.900 10.800V12Q9.900 13.200 8.600 13.200H1.400Q0.100 13.200 0.100 12Z" fill="#3d7cc4"/></svg>
<div class="t c" style="left:263px;top:630px;letter-spacing:0.019px">Ken Samuelson</div>
<div class="t c" style="left:387px;top:630px;letter-spacing:0.144px">12100 Mora Dr</div>
<div class="t c" style="left:519px;top:630px;letter-spacing:-0.040px">Santa Fe Springs</div>
<div class="t c c4" style="left:624px;top:630px">CA</div>
<div class="t c l c5" style="left:692px;top:630px">90670</div>
<div class="t c l" style="left:760px;top:630px;letter-spacing:0.160px">kents@dx-email.com</div>
<div class="abs" style="left:210px;top:645px;width:702px;height:32px;background:#f2f2f2;border-bottom:1px solid #cfcfcf"></div>
<svg style="left:218px;top:659px" width="8" height="5" viewBox="0 0 8 5"><path d="M0.700 0.600L4 4L7.300 0.600" stroke="#1a63d1" stroke-width="1.500" fill="none"/></svg>
<div class="t gr" style="left:234px;top:656px;letter-spacing:0.166px">IT (Count=8)</div>
<div class="abs" style="left:210px;top:695px;width:702px;height:1px;background:#d4d4d4"></div>
<svg style="left:229px;top:680px" width="10" height="13" viewBox="0 0 10 13"><ellipse cx="5" cy="3.300" rx="3" ry="3.300" fill="#3d7cc4"/><path d="M0.100 12V10.800Q0.100 8.200 2.300 7.300L3 7L5 9.300L7 7L7.700 7.300Q9.900 8.200 9.900 10.800V12Q9.900 13.200 8.600 13.200H1.400Q0.100 13.200 0.100 12Z" fill="#3d7cc4"/></svg>
<div class="t c" style="left:263px;top:681px;letter-spacing:0.297px">Brett Wade</div>
<div class="t c" style="left:387px;top:681px;letter-spacing:0.190px">1120 Old Mill Rd.</div>
<div class="t c" style="left:519px;top:681px;letter-spacing:0.204px">San Marino</div>
<div class="t c c4" style="left:624px;top:681px">CA</div>
<div class="t c l c5" style="left:692px;top:681px">91108</div>
<div class="t c l" style="left:760px;top:681px;letter-spacing:0.276px">brettw@dx-email.com</div>
<div class="abs" style="left:210px;top:714px;width:702px;height:1px;background:#d4d4d4"></div>
<svg style="left:229px;top:699px" width="10" height="13" viewBox="0 0 10 13"><ellipse cx="5" cy="3.300" rx="3" ry="3.300" fill="#3d7cc4"/><path d="M0.100 12V10.800Q0.100 8.200 2.300 7.300L3 7L5 9.300L7 7L7.700 7.300Q9.900 8.200 9.900 10.800V12Q9.900 13.200 8.600 13.200H1.400Q0.100 13.200 0.100 12Z" fill="#3d7cc4"/></svg>
<div class="t c" style="left:263px;top:700px;letter-spacing:0.195px">Taylor Riley</div>
<div class="t c" style="left:387px;top:700px;letter-spacing:0.163px">7776 Torreyson Dr</div>
<div class="t c" style="left:519px;top:700px;letter-spacing:0.371px">West Hollywood</div>
<div class="t c c4" style="left:624px;top:700px">CA</div>
<div class="t c l c5" style="left:692px;top:700px">90046</div>
<div class="t c l" style="left:760px;top:700px;letter-spacing:0.240px">taylorr@dx-email.com</div>
<div class="abs" style="left:210px;top:733px;width:702px;height:1px;background:#d4d4d4"></div>
<svg style="left:229px;top:718px" width="10" height="13" viewBox="0 0 10 13"><ellipse cx="5" cy="3.900" rx="2.200" ry="2.600" fill="#dc5f3c"/><path d="M1.200 5.700V3.900A3.800 3.500 0 0 1 8.800 3.900V5.700" fill="none" stroke="#dc5f3c" stroke-width="1"/><path d="M0.100 12V10.800Q0.100 8.200 2.300 7.300L3 7L5 9.300L7 7L7.700 7.300Q9.900 8.200 9.900 10.800V12Q9.900 13.200 8.600 13.200H1.400Q0.100 13.200 0.100 12Z" fill="#dc5f3c"/></svg>
<div class="t c" style="left:263px;top:719px;letter-spacing:0.241px">Amelia Harper</div>
<div class="t c" style="left:387px;top:719px;letter-spacing:0.073px">527 W 7th St</div>
<div class="t c" style="left:519px;top:719px;letter-spacing:0.106px">Los Angeles</div>
<div class="t c c4" style="left:624px;top:719px">CA</div>
<div class="t c l c5" style="left:692px;top:719px">90014</div>
<div class="t c l" style="left:760px;top:719px;letter-spacing:0.169px">ameliah@dx-email.com</div>
<div class="abs" style="left:210px;top:752px;width:702px;height:1px;background:#d4d4d4"></div>
<svg style="left:229px;top:737px" width="10" height="13" viewBox="0 0 10 13"><ellipse cx="5" cy="3.300" rx="3" ry="3.300" fill="#3d7cc4"/><path d="M0.100 12V10.800Q0.100 8.200 2.300 7.300L3 7L5 9.300L7 7L7.700 7.300Q9.900 8.200 9.900 10.800V12Q9.900 13.200 8.600 13.200H1.400Q0.100 13.200 0.100 12Z" fill="#3d7cc4"/></svg>
<div class="t c" style="left:263px;top:738px;letter-spacing:0.316px">Wally Hobbs</div>
<div class="t c" style="left:387px;top:738px;letter-spacing:0.006px">10385 Shadow Oak Dr</div>
<div class="t c" style="left:519px;top:738px;letter-spacing:0.295px">Chatsworth</div>
<div class="t c c4" style="left:624px;top:738px">CA</div>
<div class="t c l c5" style="left:692px;top:738px">91311</div>
<div class="t c l" style="left:760px;top:738px;letter-spacing:0.187px">wallyh@dx-email.com</div>
<div class="abs" style="left:210px;top:771px;width:702px;height:1px;background:#d4d4d4"></div>
<svg style="left:229px;top:756px" width="10" height="13" viewBox="0 0 10 13"><ellipse cx="5" cy="3.300" rx="3" ry="3.300" fill="#3d7cc4"/><path d="M0.100 12V10.800Q0.100 8.200 2.300 7.300L3 7L5 9.300L7 7L7.700 7.300Q9.900 8.200 9.900 10.800V12Q9.900 13.200 8.600 13.200H1.400Q0.100 13.200 0.100 12Z" fill="#3d7cc4"/></svg>
<div class="t c" style="left:263px;top:757px;letter-spacing:-0.022px">Brad Jameson</div>
<div class="t c" style="left:387px;top:757px;letter-spacing:0.022px">1100 Pico St</div>
<div class="t c" style="left:519px;top:757px;letter-spacing:0.016px">San Fernando</div>
<div class="t c c4" style="left:624px;top:757px">CA</div>
<div class="t c l c5" style="left:692px;top:757px">91340</div>
<div class="t c l" style="left:760px;top:757px;letter-spacing:0.210px">bradleyj@dx-email.com</div>
<div class="abs" style="left:210px;top:771px;width:702px;height:20px;background:#1b6bd3;border:1px dotted #e8f0ff"></div>
<svg style="left:229px;top:775px" width="10" height="13" viewBox="0 0 10 13"><ellipse cx="5" cy="3.900" rx="2.200" ry="2.600" fill="#8fb3a2"/><path d="M1.200 5.700V3.900A3.800 3.500 0 0 1 8.800 3.900V5.700" fill="none" stroke="#8fb3a2" stroke-width="1"/><path d="M0.100 12V10.800Q0.100 8.200 2.300 7.300L3 7L5 9.300L7 7L7.700 7.300Q9.900 8.200 9.900 10.800V12Q9.900 13.200 8.600 13.200H1.400Q0.100 13.200 0.100 12Z" fill="#8fb3a2"/></svg>
<div class="t c w" style="left:263px;top:776px;letter-spacing:0.128px">Karen Goodson</div>
<div class="t c w" style="left:387px;top:776px;letter-spacing:0.179px">309 Monterey Rd</div>
<div class="t c w" style="left:519px;top:776px;letter-spacing:0.003px">South Pasadena</div>
<div class="t c w c4" style="left:624px;top:776px">CA</div>
<div class="t c w u c5" style="left:692px;top:776px">91030</div>
<div class="t c w u" style="left:760px;top:776px;letter-spacing:0.177px">kareng@dx-email.com</div>
<div class="abs" style="left:210px;top:809px;width:702px;height:1px;background:#d4d4d4"></div>
<svg style="left:229px;top:794px" width="10" height="13" viewBox="0 0 10 13"><ellipse cx="5" cy="3.900" rx="2.200" ry="2.600" fill="#dc5f3c"/><path d="M1.200 5.700V3.900A3.800 3.500 0 0 1 8.800 3.900V5.700" fill="none" stroke="#dc5f3c" stroke-width="1"/><path d="M0.100 12V10.800Q0.100 8.200 2.300 7.300L3 7L5 9.300L7 7L7.700 7.300Q9.900 8.200 9.900 10.800V12Q9.900 13.200 8.600 13.200H1.400Q0.100 13.200 0.100 12Z" fill="#dc5f3c"/></svg>
<div class="t c" style="left:263px;top:795px;letter-spacing:0.278px">Morgan Kennedy</div>
<div class="t c" style="left:387px;top:795px;letter-spacing:0.191px">11222 Dilling St</div>
<div class="t c" style="left:519px;top:795px;letter-spacing:-0.024px">San Fernando V...</div>
<div class="t c c4" style="left:624px;top:795px">CA</div>
<div class="t c l c5" style="left:692px;top:795px">91604</div>
<div class="t c l" style="left:760px;top:795px;letter-spacing:0.233px">morgank@dx-email.com</div>
<div class="abs" style="left:210px;top:828px;width:702px;height:1px;background:#d4d4d4"></div>
<svg style="left:229px;top:813px" width="10" height="13" viewBox="0 0 10 13"><ellipse cx="5" cy="3.300" rx="3" ry="3.300" fill="#4f4f4f"/><path d="M0.100 12V10.800Q0.100 8.200 2.300 7.300L3 7L5 9.300L7 7L7.700 7.300Q9.900 8.200 9.900 10.800V12Q9.900 13.200 8.600 13.200H1.400Q0.100 13.200 0.100 12Z" fill="#4f4f4f"/></svg>
<div class="t c" style="left:263px;top:814px;letter-spacing:0.221px">Violet Bailey</div>
<div class="t c" style="left:387px;top:814px;letter-spacing:-0.041px">1418 Descanso Dr</div>
<div class="t c" style="left:519px;top:814px;letter-spacing:-0.141px">La Canada</div>
<div class="t c c4" style="left:624px;top:814px">CA</div>
<div class="t c l c5" style="left:692px;top:814px">91011</div>
<div class="t c l" style="left:760px;top:814px;letter-spacing:0.259px">violetb@dx-email.com</div>
<div class="abs" style="left:210px;top:829px;width:702px;height:32px;background:#f2f2f2;border-bottom:1px solid #cfcfcf"></div>
<svg style="left:218px;top:843px" width="8" height="5" viewBox="0 0 8 5"><path d="M0.700 0.600L4 4L7.300 0.600" stroke="#1a63d1" stroke-width="1.500" fill="none"/></svg>
<div class="t gr" style="left:234px;top:840px;letter-spacing:0.309px">Management (Count=4)</div>
<div class="abs" style="left:210px;top:879px;width:702px;height:1px;background:#d4d4d4"></div>
<svg style="left:229px;top:864px" width="10" height="13" viewBox="0 0 10 13"><ellipse cx="5" cy="3.300" rx="3" ry="3.300" fill="#3d7cc4"/><path d="M0.100 12V10.800Q0.100 8.200 2.300 7.300L3 7L5 9.300L7 7L7.700 7.300Q9.900 8.200 9.900 10.800V12Q9.900 13.200 8.600 13.200H1.400Q0.100 13.200 0.100 12Z" fill="#3d7cc4"/></svg>
<div class="t c" style="left:263px;top:865px;letter-spacing:0.176px">John Heart</div>
<div class="t c" style="left:387px;top:865px;letter-spacing:-0.046px">351 S Hill St.</div>
<div class="t c" style="left:519px;top:865px;letter-spacing:0.106px">Los Angeles</div>
<div class="t c c4" style="left:624px;top:865px">CA</div>
<div class="t c l c5" style="left:692px;top:865px">90013</div>
<div class="t c l" style="left:760px;top:865px;letter-spacing:0.206px">jheart@dx-email.com</div>
<div class="abs" style="left:210px;top:898px;width:702px;height:1px;background:#d4d4d4"></div>
<svg style="left:229px;top:883px" width="10" height="13" viewBox="0 0 10 13"><path d="M1 -1.500H10V2.800" stroke="#666" stroke-width="1" fill="none"/><path d="M2 -0.200H8" stroke="#888" stroke-width="0.700"/><path d="M2.100 0.900H7.900V3.600Q7.900 6.600 5 6.600Q2.100 6.600 2.100 3.600Z" fill="#3d7cc4"/><path d="M0.100 12V10.800Q0.100 8.200 2.300 7.300L3 7L5 9.300L7 7L7.700 7.300Q9.900 8.200 9.900 10.800V12Q9.900 13.200 8.600 13.200H1.400Q0.100 13.200 0.100 12Z" fill="#3d7cc4"/></svg>
<div class="t c" style="left:263px;top:884px;letter-spacing:0.190px">Samantha Bright</div>
<div class="t c" style="left:387px;top:884px;letter-spacing:0.069px">5801 Wilshire Blvd.</div>
<div class="t c" style="left:519px;top:884px;letter-spacing:0.106px">Los Angeles</div>
<div class="t c c4" style="left:624px;top:884px">CA</div>
<div class="t c l c5" style="left:692px;top:884px">90036</div>
<div class="t c l" style="left:760px;top:884px;letter-spacing:0.162px">samanthab@dx-email.com</div>
<div class="abs" style="left:210px;top:917px;width:702px;height:1px;background:#d4d4d4"></div>
<svg style="left:229px;top:902px" width="10" height="13" viewBox="0 0 10 13"><ellipse cx="5" cy="3.300" rx="3" ry="3.300" fill="#3d7cc4"/><path d="M0.100 12V10.800Q0.100 8.200 2.300 7.300L3 7L5 9.300L7 7L7.700 7.300Q9.900 8.200 9.900 10.800V12Q9.900 13.200 8.600 13.200H1.400Q0.100 13.200 0.100 12Z" fill="#3d7cc4"/></svg>
<div class="t c" style="left:263px;top:903px;letter-spacing:0.475px">Arthur Miller</div>
<div class="t c" style="left:387px;top:903px;letter-spacing:0.043px">3800 Homer St.</div>
<div class="t c" style="left:519px;top:903px;letter-spacing:0.106px">Los Angeles</div>
<div class="t c c4" style="left:624px;top:903px">CA</div>
<div class="t c l c5" style="left:692px;top:903px">90031</div>
<div class="t c l" style="left:760px;top:903px;letter-spacing:0.249px">arthurm@dx-email.com</div>
<div class="abs" style="left:927px;top:176px;width:130px;height:130px;background:#fff;border:1px solid #c9c9c9"></div>
<svg style="left:928px;top:177px;overflow:hidden" width="128" height="128" viewBox="0 0 128 128">
<defs>
<filter id="bl" x="-10%" y="-10%" width="120%" height="120%"><feGaussianBlur stdDeviation="0.7"/></filter>
<linearGradient id="hair" x1="0" y1="0" x2="1" y2="1"><stop offset="0" stop-color="#efd59a"/><stop offset="0.5" stop-color="#e0b86e"/><stop offset="1" stop-color="#d2a255"/></linearGradient>
<linearGradient id="armL" x1="0" y1="0" x2="1" y2="0"><stop offset="0" stop-color="#e89550"/><stop offset="0.6" stop-color="#f2b27a"/><stop offset="1" stop-color="#de8a48"/></linearGradient>
<linearGradient id="armR" x1="0" y1="0" x2="1" y2="0"><stop offset="0" stop-color="#e59052"/><stop offset="1" stop-color="#f0a868"/></linearGradient>
<pattern id="chk" width="4.600" height="4.600" patternUnits="userSpaceOnUse"><rect width="4.600" height="4.600" fill="#cdf0de"/><rect width="2.300" height="2.300" fill="#edf3c0"/><rect x="2.300" y="2.300" width="2.300" height="2.300" fill="#b4e9e0"/></pattern>
</defs>
<g filter="url(#bl)">
<path d="M38 63Q33 46 37 30Q41 8 60 5Q76 4 81 20Q84 34 83 44Q86 54 89 60Q84 66 74 64L50 66Q42 68 38 63Z" fill="url(#hair)"/>
<path d="M24 128Q22 96 24 82Q26 70 34 68L40 70Q36 96 38 128Z" fill="url(#armL)"/>
<path d="M90 62Q98 66 100 84Q103 106 102 128H93Q95 96 90 62Z" fill="url(#armR)"/>
<path d="M55 48H71V62Q82 64 88 62L66 92L38 66Q50 64 55 60Z" fill="#efb07a"/>
<path d="M54 49Q61 56 70 50L70 54Q62 59 55 55Z" fill="#e29a60"/>
<ellipse cx="62.800" cy="31" rx="11.800" ry="19.500" fill="#f7d3b4"/><ellipse cx="57" cy="35" rx="3" ry="2.500" fill="#f2b8a0" opacity="0.600"/><ellipse cx="70" cy="35.500" rx="3" ry="2.500" fill="#f2b8a0" opacity="0.600"/>
<path d="M51 30Q50 14 61 9Q55 18 54 30Q53 44 49 54Q44 60 40 62Q46 50 46 40Q46 34 51 30Z" fill="#e3bc72"/>
<path d="M62 9Q72 8 77 20Q80 32 78 46Q80 56 86 60Q78 58 75 50Q76 38 74 26Q70 14 62 9Z" fill="#dcb066"/>
<path d="M57 39.500Q64 46 71 39.500Q64 42 57 39.500Z" fill="#d0505a"/>
<path d="M58.500 40.300Q64 43.800 69.500 40.300Q64 41.500 58.500 40.300Z" fill="#fff"/>
<ellipse cx="58" cy="28" rx="1.900" ry="1" fill="#4a5a9a"/><ellipse cx="70.500" cy="28.300" rx="1.900" ry="1" fill="#4a5a9a"/>
<path d="M55 25.500Q58 24.300 61 25.500M68 25.800Q70.500 24.600 73.500 26" stroke="#c89858" stroke-width="0.800" fill="none"/>
<path d="M27 71Q32 64 38 64Q44 66 48 72Q56 86 65.500 90Q76 80 84 62Q92 60 93 66Q97 96 96 128H40Q40 98 27 71Z" fill="url(#chk)"/>
<path d="M37 65Q44 66 48 72Q56 86 65.500 90Q76 80 84 62" stroke="#a9e0c6" stroke-width="2.200" fill="none"/>
<path d="M60 88Q66 93 74 88L83 93Q72 96 67 92L59 103Q58 95 60 88Z" fill="#a5e2c8"/>
<rect x="64.500" y="89" width="1.600" height="4" fill="#7a5a3a"/>
</g></svg>
<div class="t" style="left:1070.500px;top:198px;font-size:26.500px;color:#585858;letter-spacing:-0.053px">Karen Goodson</div>
<div class="t" style="left:1071px;top:236px;font-size:18px;color:#666;letter-spacing:0.719px">Programmer</div>
<svg style="left:1071px;top:260px" width="28" height="28" viewBox="-14 -14 28 28"><circle cx="0" cy="0" r="13" fill="none" stroke="#4f4f4f" stroke-width="1.700"/><path d="M-6 -5H6V3H1.500L-0.500 6V3H-6Z" fill="#4f4f4f"/></svg>
<svg style="left:1109px;top:260px" width="28" height="28" viewBox="-14 -14 28 28"><circle cx="0" cy="0" r="13" fill="none" stroke="#4f4f4f" stroke-width="1.700"/><path d="M-4.600 -3.500L-2.600 -5.200L-0.900 -2.600L-2 -1.500Q-0.800 1 1.600 2.300L2.800 1.200L5.200 3L3.600 5Q1.500 5.500 -1.500 2.500Q-5 -1 -4.600 -3.500Z" fill="#4f4f4f"/></svg>
<svg style="left:1147px;top:260px" width="28" height="28" viewBox="-14 -14 28 28"><circle cx="0" cy="0" r="13" fill="none" stroke="#4f4f4f" stroke-width="1.700"/><path d="M-6 -3.500H2.500V3.500H-6ZM3 -0.800L6 -3.200V3.200L3 0.800Z" fill="#4f4f4f"/></svg>
<svg style="left:1185px;top:260px" width="28" height="28" viewBox="-14 -14 28 28"><circle cx="0" cy="0" r="13" fill="none" stroke="#4f4f4f" stroke-width="1.700"/><path d="M-6 -4H6V4H-6Z" fill="#4f4f4f"/><path d="M-5.500 -3.500L0 1L5.500 -3.500" stroke="#f2f2f2" stroke-width="1.100" fill="none"/></svg>
<div class="abs" style="left:927px;top:322px;width:498px;height:1px;background:#c4c4c4"></div>
<div class="t" style="left:1271.500px;top:336px;font-size:14.500px;color:#555;transform:scaleX(0.9156)">EVALUATIONS</div>
<div class="t" style="left:1370.500px;top:337px;font-size:12px;color:#555">|</div>
<div class="t" style="left:1381px;top:336px;font-size:14.500px;font-weight:bold;color:#1b3f9e;transform:scaleX(0.9006)">TASKS</div>
<div class="abs" style="left:927px;top:354px;width:498px;height:567px;background:#fff;border:1px solid #b4b4b4"></div>
<div class="abs" style="left:928px;top:493px;width:496px;height:1px;background:#d0d0d0"></div>
<div class="t tt" style="left:946px;top:373px;letter-spacing:-0.159px">Estimate Time Required to Touch-Enab...</div>
<div class="t" style="left:1333.700px;top:371px;font-size:9px;color:#8a8a8a;transform:scaleX(0.9923)">DUE DATE</div>
<div class="t" style="left:1278px;width:100px;text-align:right;top:385px;font-size:11px;font-weight:bold;color:#444">07 Aug 2013</div>
<svg style="left:1386px;top:373px" width="20" height="20" viewBox="0 0 20 20"><path d="M0.600 0.300L6.300 18.700" stroke="#6e6e6e" stroke-width="1.500"/><path d="M0.700 0.300L10.700 1.200L12.300 4.500L19.400 4.100L11.100 8.700L10.300 6.600L4.800 9.100Z" fill="#6e6e6e"/></svg>
<div class="t ds" style="left:946px;top:404px;letter-spacing:0.303px">Management has decided to stick with existing apps. We simply need</div>
<div class="t ds" style="left:946px;top:417px;letter-spacing:0.340px">to make them touch-enabled for the new Surface Tablets being</div>
<div class="t ds" style="left:946px;top:430px;letter-spacing:0.312px">distributed to the field. Can you get me an estimate?</div>
<div class="t ds" style="left:946px;top:443px;letter-spacing:0.220px">Karen Goodson: Bard, they are already touch-enabled. We are usin...</div>
<div class="t pc" style="left:1334px;top:439px;letter-spacing:0.979px">100%</div>
<div class="abs" style="left:946px;top:471px;width:460px;height:6px;background:#d2d2d2"><div style="width:100%;height:6px;background:#3c64da"></div></div>
<div class="abs" style="left:928px;top:632px;width:496px;height:1px;background:#d0d0d0"></div>
<div class="t tt" style="left:946px;top:512px;letter-spacing:-0.228px">Create New Product Pages</div>
<div class="t" style="left:1333.700px;top:510px;font-size:9px;color:#8a8a8a;transform:scaleX(0.9923)">DUE DATE</div>
<div class="t" style="left:1278px;width:100px;text-align:right;top:524px;font-size:11px;font-weight:bold;color:#444">04 Oct 2013</div>
<svg style="left:1386px;top:512px" width="20" height="20" viewBox="0 0 20 20"><path d="M0.600 0.300L6.300 18.700" stroke="#6e6e6e" stroke-width="1.500"/><path d="M0.700 0.300L10.700 1.200L12.300 4.500L19.400 4.100L11.100 8.700L10.300 6.600L4.800 9.100Z" fill="#6e6e6e"/></svg>
<div class="t ds" style="left:946px;top:543px;letter-spacing:0.216px">You have the PSDs from the design team. I need the product pages</div>
<div class="t ds" style="left:946px;top:556px;letter-spacing:0.339px">updated. Management wants this done immediately so we can roll</div>
<div class="t ds" style="left:946px;top:569px;letter-spacing:0.259px">out by Octover 15.</div>
<div class="t ds" style="left:946px;top:582px;letter-spacing:0.312px">Karen Goodson: I'm going to have a lot of overtime this week.</div>
<div class="t pc" style="left:1334px;top:578px;letter-spacing:0.979px">100%</div>
<div class="abs" style="left:946px;top:610px;width:460px;height:6px;background:#d2d2d2"><div style="width:100%;height:6px;background:#3c64da"></div></div>
<div class="abs" style="left:928px;top:771px;width:496px;height:1px;background:#d0d0d0"></div>
<div class="t tt" style="left:946px;top:651px;letter-spacing:-0.079px">Code Review - New Automation Server</div>
<div class="t" style="left:1333.700px;top:649px;font-size:9px;color:#8a8a8a;transform:scaleX(0.9923)">DUE DATE</div>
<div class="t" style="left:1278px;width:100px;text-align:right;top:663px;font-size:11px;font-weight:bold;color:#444">15 Feb 2014</div>
<svg style="left:1386px;top:651px" width="20" height="20" viewBox="0 0 20 20"><path d="M0.600 0.300L6.300 18.700" stroke="#6e6e6e" stroke-width="1.500"/><path d="M0.700 0.300L10.700 1.200L12.300 4.500L19.400 4.100L11.100 8.700L10.300 6.600L4.800 9.100Z" fill="#6e6e6e"/></svg>
<div class="t ds" style="left:946px;top:682px;letter-spacing:0.290px">Need your eyes on the new Automation Server product. I'm having</div>
<div class="t ds" style="left:946px;top:695px;letter-spacing:0.312px">performance issues and you have to figure out what is causing it.</div>
<div class="t ds" style="left:946px;top:708px;letter-spacing:0.345px">Karen Goodson: We need time to figure this out.</div>
<div class="t pc" style="left:1349px;top:717px;letter-spacing:1.477px">75%</div>
<div class="abs" style="left:946px;top:749px;width:460px;height:6px;background:#d2d2d2"><div style="width:75%;height:6px;background:#3c64da"></div></div>
<div class="abs" style="left:928px;top:910px;width:496px;height:1px;background:#d0d0d0"></div>
<div class="t tt" style="left:946px;top:790px;letter-spacing:-0.383px">Review Issue Report and Provi...</div>
<div class="t" style="left:1333.700px;top:788px;font-size:9px;color:#8a8a8a;transform:scaleX(0.9923)">DUE DATE</div>
<div class="t" style="left:1278px;width:100px;text-align:right;top:802px;font-size:11px;font-weight:bold;color:#444">01 Jun 2014</div>
<svg style="left:1386px;top:790px" width="20" height="20" viewBox="0 0 20 20"><path d="M0.600 0.300L6.300 18.700" stroke="#f5a623" stroke-width="1.500"/><path d="M0.700 0.300L10.700 1.200L12.300 4.500L19.400 4.100L11.100 8.700L10.300 6.600L4.800 9.100Z" fill="#f5a623"/></svg>
<div class="t ds" style="left:946px;top:821px;letter-spacing:0.267px">Karen, we have a stack of issues with the new apps that you need to</div>
<div class="t ds" style="left:946px;top:834px;letter-spacing:0.243px">review and fix asap. I've logged everything in the db. Give me your</div>
<div class="t ds" style="left:946px;top:847px;letter-spacing:0.754px">thoughts.</div>
<div class="t ds" style="left:946px;top:860px;letter-spacing:0.372px">Karen Goodson: I'm working on these. Will let you know.</div>
<div class="t pc" style="left:1349px;top:856px;letter-spacing:1.477px">50%</div>
<div class="abs" style="left:946px;top:888px;width:460px;height:6px;background:#d2d2d2"><div style="width:50%;height:6px;background:#3c64da"></div></div>
<div class="t nv" style="left:10px;top:945px;color:#3b86dc;transform:scaleX(0.8564)">Employees</div>
<div class="t nv" style="left:108.500px;top:945px;transform:scaleX(0.8709)">Customers</div>
<div class="t nv" style="left:207px;top:945px;transform:scaleX(0.8869)">Products</div>
<div class="t nv" style="left:291px;top:945px;transform:scaleX(0.8100)">Sales</div>
<div class="t nv" style="left:346.500px;top:945px;transform:scaleX(0.9070)">Opportunities</div>
<svg style="left:477px;top:952px" width="26" height="5" viewBox="0 0 26 5"><circle cx="2.500" cy="2.500" r="2.200" fill="#555"/><circle cx="12.500" cy="2.500" r="2.200" fill="#555"/><circle cx="22.500" cy="2.500" r="2.200" fill="#555"/></svg>
<div class="abs" style="left:0;top:974px;width:1440px;height:26px;background:#464646"></div>
<div class="t" style="left:7px;top:982px;font-size:11px;color:#fff;transform:scaleX(0.9269)">RECORDS: 51</div>
<div class="abs" style="left:1363px;top:974px;width:30px;height:26px;background:#1b6bd3"></div>
<svg style="left:1371px;top:981px" width="14" height="12" viewBox="0 0 14 12"><rect x="0.500" y="0.500" width="13" height="11" fill="#1b6bd3" stroke="#fff"/><rect x="0" y="0" width="5" height="12" fill="#fff"/></svg>
<svg style="left:1401px;top:981px" width="14" height="12" viewBox="0 0 14 12" fill="none" stroke="#fff"><path d="M0.600 0.600H13.400V10.400H8L7 11.400L6 10.400H0.600Z" stroke-width="1.200"/><path d="M7 1V10.500" stroke-width="1"/><path d="M2.300 3H5.700M2.300 5H5.700M2.300 7H5.700M2.300 9H5.700M8.300 3H11.700M8.300 5H11.700M8.300 7H11.700M8.300 9H11.700" stroke="#ddd" stroke-width="0.900"/></svg>
<svg style="left:1425px;top:985px" width="12" height="12" viewBox="0 0 12 12" fill="#9a9a9a"><rect x="9" y="1" width="2" height="2"/><rect x="5" y="5" width="2" height="2"/><rect x="9" y="5" width="2" height="2"/><rect x="1" y="9" width="2" height="2"/><rect x="5" y="9" width="2" height="2"/><rect x="9" y="9" width="2" height="2"/></svg>
</body>
</html>
